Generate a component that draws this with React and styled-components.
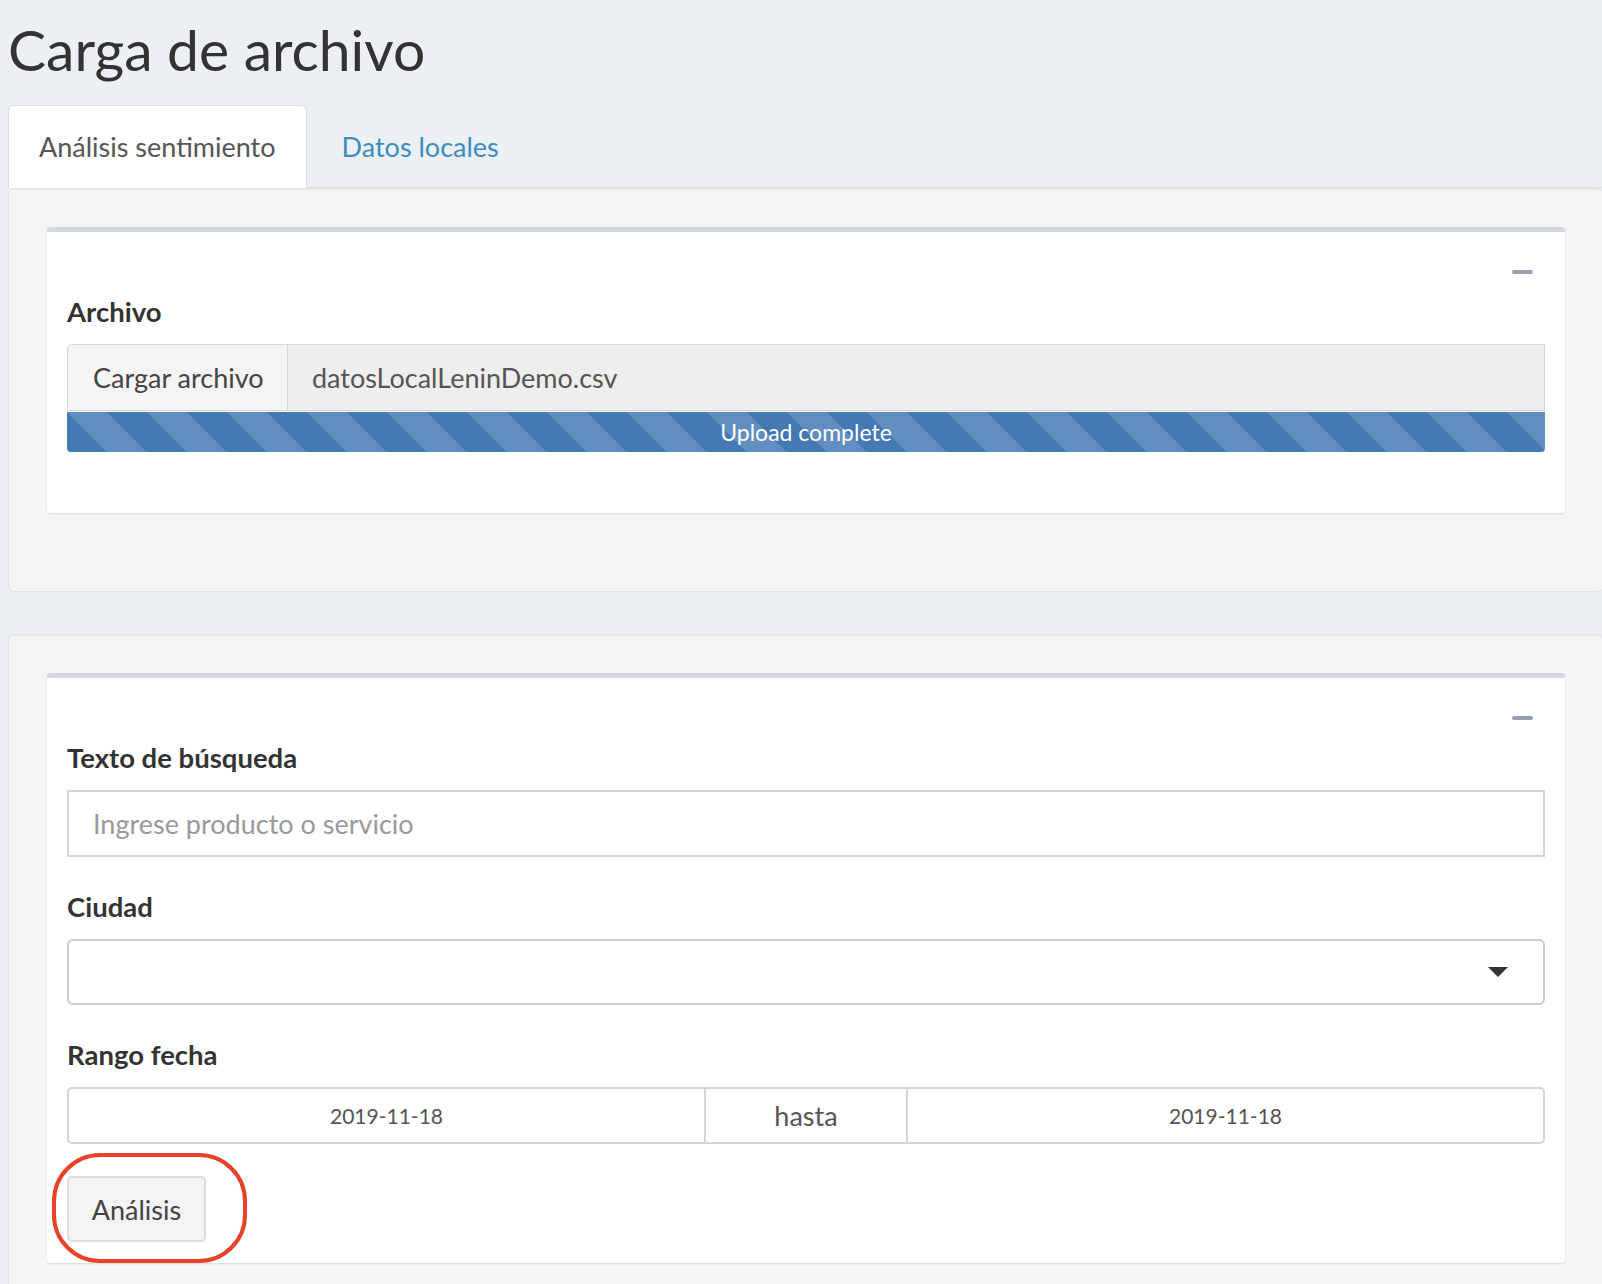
import React from 'react'
import styled, { createGlobalStyle } from 'styled-components'

const GlobalStyle = createGlobalStyle`
    html, body {
        margin: 0;
        padding: 0;
        background: #ecf0f5;
        overflow-x: hidden;
    }
    body {
        font-family: Lato, "Liberation Sans", sans-serif;
        color: #444;
        font-size: 27px;
    }
    * { box-sizing: border-box; }
`;

const tabs = ["Análisis sentimiento", "Datos locales"];

const App = () => {
    return (
        <Page>
            <GlobalStyle />
            <Title>Carga de archivo</Title>
            <TabBar>
                {tabs.map((t, i) => <Tab key={t} active={i === 0}>{t}</Tab>)}
            </TabBar>
            <Well>
                <Box>
                    <BoxHeader><Minus /></BoxHeader>
                    <BoxBody bottom={61}>
                        <Label>Archivo</Label>
                        <FileGroup>
                            <FileButton>Cargar archivo</FileButton>
                            <FileName>datosLocalLeninDemo.csv</FileName>
                        </FileGroup>
                        <Progress>Upload complete</Progress>
                    </BoxBody>
                </Box>
            </Well>
            <Well>
                <Box>
                    <BoxHeader><Minus /></BoxHeader>
                    <BoxBody bottom={21}>
                        <FormGroup>
                            <Label>Texto de búsqueda</Label>
                            <TextInput placeholder="Ingrese producto o servicio" />
                        </FormGroup>
                        <FormGroup>
                            <Label>Ciudad</Label>
                            <Select>
                                <Caret />
                            </Select>
                        </FormGroup>
                        <FormGroup gap={32}>
                            <Label>Rango fecha</Label>
                            <DateRange>
                                <DateCell>2019-11-18</DateCell>
                                <DateSep>hasta</DateSep>
                                <DateCell>2019-11-18</DateCell>
                            </DateRange>
                        </FormGroup>
                        <ButtonWrap>
                            <Button>Análisis</Button>
                            <Ring />
                        </ButtonWrap>
                    </BoxBody>
                </Box>
            </Well>
        </Page>
    );
}

const Page = styled.div`
    width: 1604px;
    padding-left: 8px;
`;

const Title = styled.h2`
    margin: 15px 0 22px 0;
    font-size: 57px;
    line-height: 68px;
    font-weight: 400;
    color: #333;
`;

const TabBar = styled.div`
    display: flex;
    gap: 4px;
    border-bottom: 1px solid #dddddd;
    height: 83px;
`;

const Tab = styled.div`
    height: 83px;
    padding: 0 30px;
    display: flex;
    align-items: center;
    line-height: 40px;
    border: 1px solid ${(p) => p.active ? '#dddddd' : 'transparent'};
    border-bottom: none;
    border-radius: 6px 6px 0 0;
    background: ${(p) => p.active ? '#ffffff' : 'transparent'};
    color: ${(p) => p.active ? '#555555' : '#3c8dbc'};
`;

const Well = styled.div`
    background: #f5f5f5;
    border: 1px solid #e3e3e3;
    border-radius: 6px;
    padding: 38px;
    margin-bottom: 42px;
    box-shadow: inset 0 1px 1px rgba(0, 0, 0, 0.05);
`;

const Box = styled.div`
    background: #ffffff;
    border-top: 5px solid #d2d6de;
    border-radius: 4px;
    box-shadow: 0 1px 2px rgba(0, 0, 0, 0.12);
    margin-bottom: 40px;
`;

const BoxHeader = styled.div`
    height: 60px;
    display: flex;
    justify-content: flex-end;
    align-items: flex-start;
    padding: 38px 32px 0 0;
`;

const Minus = styled.span`
    display: block;
    width: 21px;
    height: 4px;
    border-radius: 2px;
    background: #97a0b3;
`;

const BoxBody = styled.div`
    padding: 0 20px ${(p) => p.bottom}px 20px;
`;

const FormGroup = styled.div`
    margin-bottom: ${(p) => p.gap || 30}px;
`;

const Label = styled.div`
    font-weight: 700;
    font-size: 27.5px;
    color: #333;
    line-height: 40px;
    margin-bottom: 12px;
`;

const FileGroup = styled.div`
    display: flex;
    height: 67px;
    border: 1px solid #d2d6de;
    border-radius: 5px 0 0 0;
    overflow: hidden;
`;

const FileButton = styled.div`
    width: 220px;
    background: #f4f4f4;
    border-right: 1px solid #d2d6de;
    display: flex;
    align-items: center;
    padding-left: 25px;
    color: #444;
`;

const FileName = styled.div`
    flex: 1;
    background: #eeeeee;
    display: flex;
    align-items: center;
    padding-left: 24px;
    color: #555;
`;

const Progress = styled.div`
    height: 40px;
    margin-top: 1px;
    border-radius: 0 0 4px 4px;
    background-color: #4479b3;
    background-image: linear-gradient(45deg, #628dbf 25%, transparent 25%, transparent 50%, #628dbf 50%, #628dbf 75%, transparent 75%, transparent);
    background-size: 80px 80px;
    color: #fff;
    font-size: 23px;
    line-height: 40px;
    text-align: center;
`;

const TextInput = styled.input`
    display: block;
    width: 100%;
    height: 67px;
    border: 2px solid #d2d6de;
    padding: 0 24px;
    font: inherit;
    color: #555;
    outline: none;
    &::placeholder { color: #999; }
`;

const Select = styled.div`
    position: relative;
    height: 66px;
    border: 2px solid #cccccc;
    border-radius: 6px;
    display: flex;
    align-items: center;
    justify-content: flex-end;
    padding-right: 35px;
`;

const Caret = styled.span`
    width: 0;
    height: 0;
    border-left: 10px solid transparent;
    border-right: 10px solid transparent;
    border-top: 10px solid #333;
`;

const DateRange = styled.div`
    display: grid;
    grid-template-columns: 1fr 204px 1fr;
    height: 57px;
    border: 2px solid #d2d6de;
    border-radius: 5px;
`;

const DateCell = styled.div`
    display: flex;
    align-items: center;
    justify-content: center;
    font-size: 21px;
    color: #555;
`;

const DateSep = styled.div`
    display: flex;
    align-items: center;
    justify-content: center;
    border-left: 2px solid #d2d6de;
    border-right: 2px solid #d2d6de;
    color: #555;
`;

const ButtonWrap = styled.div`
    position: relative;
    display: inline-block;
`;

const Button = styled.button`
    display: block;
    width: 139px;
    height: 66px;
    background: #f4f4f4;
    border: 2px solid #dddddd;
    border-radius: 5px;
    font: inherit;
    color: #444;
    cursor: pointer;
`;

const Ring = styled.span`
    position: absolute;
    left: -15px;
    top: -23px;
    width: 195px;
    height: 110px;
    border: 4px solid #e8432a;
    border-radius: 48px;
    pointer-events: none;
`;

export default App;
